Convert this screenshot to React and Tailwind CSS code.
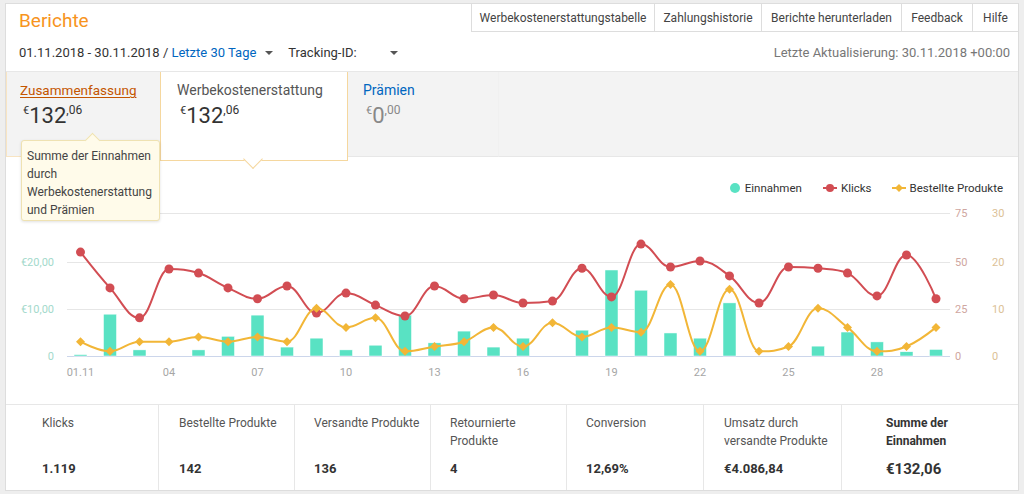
import React from "react";

const bars = [0.3, 8.9, 1.3, 0, 1.3, 4.2, 8.7, 1.9, 3.8, 1.3, 2.3, 8.7, 2.8, 5.3, 1.9, 3.8, 0, 5.5, 18.3, 14, 4.9, 3.8, 11.3, 0, 0, 2.1, 5.1, 3, 0.9, 1.4];
const klicks = [54.5, 35.7, 20, 45.6, 43.5, 35.7, 30, 36.7, 22.5, 33, 26.7, 21, 36.7, 30, 32, 27.8, 28.8, 46, 31, 58.7, 46.7, 49.8, 42, 27.8, 46.7, 46, 43.5, 31.5, 53, 30];
const bestellt = [3, 1, 3, 3, 4, 3, 4, 3, 10, 6, 8, 1, 2, 3, 6, 2, 7, 4, 6, 5, 15, 1, 14, 1, 2, 10, 6, 1, 2, 6];

const xAt = (i) => 80.5 + i * 29.5;
const BASE = 356;

// highcharts-like spline
const spline = (pts) => {
  const sm = 1.5;
  const den = 2.5;
  const rc = [];
  let d = `M${pts[0][0]},${pts[0][1]}`;
  pts.forEach((p, i) => {
    const last = pts[i - 1];
    const next = pts[i + 1];
    let lcx = p[0], lcy = p[1];
    if (last && next) {
      lcx = (sm * p[0] + last[0]) / den;
      lcy = (sm * p[1] + last[1]) / den;
      const rcx = (sm * p[0] + next[0]) / den;
      let rcy = (sm * p[1] + next[1]) / den;
      const corr = ((rcy - lcy) * (rcx - p[0])) / (rcx - lcx) + p[1] - rcy;
      lcy += corr;
      rcy += corr;
      if (lcy > last[1] && lcy > p[1]) {
        lcy = Math.max(last[1], p[1]);
        rcy = 2 * p[1] - lcy;
      } else if (lcy < last[1] && lcy < p[1]) {
        lcy = Math.min(last[1], p[1]);
        rcy = 2 * p[1] - lcy;
      }
      if (rcy > next[1] && rcy > p[1]) {
        rcy = Math.max(next[1], p[1]);
        lcy = 2 * p[1] - rcy;
      } else if (rcy < next[1] && rcy < p[1]) {
        rcy = Math.min(next[1], p[1]);
        lcy = 2 * p[1] - rcy;
      }
      rc[i] = [rcx, rcy];
    }
    if (last) {
      const r = rc[i - 1] || last;
      d += ` C${r[0]},${r[1]} ${lcx},${lcy} ${p[0]},${p[1]}`;
    }
  });
  return d;
};

const Chart = () => {
  const kPts = klicks.map((v, i) => [xAt(i), BASE - (v * 143) / 75]);
  const bPts = bestellt.map((v, i) => [xAt(i), BASE - (v * 143) / 30]);
  const xLabels = ["01.11", "04", "07", "10", "13", "16", "19", "22", "25", "28"];

  return (
    <svg width="1012" height="209" className="block">
      <g transform="translate(-6,-195)">
        {/* grid */}
        {[213, 262, 309].map((y) => (
          <line key={y} x1="67" x2="950" y1={y + 0.5} y2={y + 0.5} stroke="#e6e6e6" />
        ))}
        <line x1="67" x2="950" y1="356.5" y2="356.5" stroke="#ccd6eb" />

        {/* left axis */}
        <g fill="#a3d9cb" fontSize="11" textAnchor="end">
          <text x="54" y="266">€20,00</text>
          <text x="54" y="313">€10,00</text>
          <text x="54" y="360">0</text>
        </g>
        {/* right axes */}
        <g fill="#cfa6a0" fontSize="11">
          <text x="955" y="217">75</text>
          <text x="955" y="266">50</text>
          <text x="955" y="313">25</text>
          <text x="955" y="360">0</text>
        </g>
        <g fill="#dcc196" fontSize="11">
          <text x="992" y="217">30</text>
          <text x="992" y="266">20</text>
          <text x="992" y="313">10</text>
          <text x="992" y="360">0</text>
        </g>

        {/* x labels */}
        <g fill="#a6a6a6" fontSize="11" textAnchor="middle">
          {xLabels.map((l, k) => (
            <text key={l} x={xAt(k * 3)} y="376">
              {l}
            </text>
          ))}
        </g>

        {/* bars */}
        {bars.map((v, i) =>
          v > 0 ? (
            <rect
              key={i}
              x={xAt(i) - 6.5}
              y={BASE - v * 4.7}
              width="13"
              height={v * 4.7}
              fill="#59e2c3"
              stroke="#ffffff"
              strokeWidth="0.5"
            />
          ) : null
        )}

        {/* klicks */}
        <path d={spline(kPts)} fill="none" stroke="#d24d53" strokeWidth="2" />
        {kPts.map((p, i) => (
          <circle key={i} cx={p[0]} cy={p[1]} r="4.5" fill="#d24d53" />
        ))}

        {/* bestellte produkte */}
        <path d={spline(bPts)} fill="none" stroke="#f2b637" strokeWidth="2" />
        {bPts.map((p, i) => (
          <path
            key={i}
            d={`M${p[0]},${p[1] - 4.5} L${p[0] + 4.5},${p[1]} L${p[0]},${p[1] + 4.5} L${p[0] - 4.5},${p[1]} Z`}
            fill="#f2b637"
          />
        ))}
      </g>
    </svg>
  );
};

const Caret = () => (
  <span className="inline-block w-0 h-0 border-x-[4px] border-x-transparent border-t-[4px] border-t-[#555555] align-middle" />
);

const Price = ({ whole, cents, muted }) => (
  <div className={`flex items-start ml-[3px] mt-[3px] ${muted ? "text-[#888888]" : "text-[#333333]"}`}>
    <span className="text-[11px] leading-[14px] mt-[1px]">€</span>
    <span className="text-[22px] leading-[26px]">{whole}</span>
    <span className="text-[12px] leading-[14px]">,{cents}</span>
  </div>
);

const stats = [
  { label: ["Klicks"], value: "1.119", w: "w-[153px]", pl: "pl-[36px]" },
  { label: ["Bestellte Produkte"], value: "142", w: "w-[136px]", pl: "pl-[20px]" },
  { label: ["Versandte Produkte"], value: "136", w: "w-[136px]", pl: "pl-[19px]" },
  { label: ["Retournierte", "Produkte"], value: "4", w: "w-[136px]", pl: "pl-[19px]" },
  { label: ["Conversion"], value: "12,69%", w: "w-[137px]", pl: "pl-[19px]" },
  { label: ["Umsatz durch", "versandte Produkte"], value: "€4.086,84", w: "w-[138px]", pl: "pl-[20px]" },
];

export default function App() {
  return (
    <div className="min-h-screen bg-[#eeeeee] pt-[3px] px-[5px] font-['Roboto',sans-serif] text-[#333333]">
      <div className="bg-white border border-[#dddddd]">
        {/* header row */}
        <div className="flex justify-between items-start h-[33px]">
          <h1 className="pl-[13px] pt-[5px] text-[19px] leading-[24px] text-[#f7941d]">Berichte</h1>
          <div className="flex text-[12px] text-[#444444]">
            {[
              ["Werbekostenerstattungstabelle", "w-[183px]"],
              ["Zahlungshistorie", "w-[107px]"],
              ["Berichte herunterladen", "w-[140px]"],
              ["Feedback", "w-[71px]"],
              ["Hilfe", "w-[46px]"],
            ].map(([t, w]) => (
              <div
                key={t}
                className={`${w} h-[28px] flex items-center justify-center border-l border-b border-[#dddddd]`}
              >
                {t}
              </div>
            ))}
          </div>
        </div>

        {/* filter row */}
        <div className="flex items-center justify-between h-[34px] pb-[3px] pl-[13px] pr-[8px] text-[13px]">
          <div className="flex items-center">
            <span>01.11.2018 - 30.11.2018 /&nbsp;</span>
            <span className="text-[#0066c0]">Letzte 30 Tage</span>
            <span className="ml-[9px]">
              <Caret />
            </span>
            <span className="ml-[15px]">Tracking-ID:</span>
            <span className="ml-[33px]">
              <Caret />
            </span>
          </div>
          <div className="text-[#777777]">Letzte Aktualisierung: 30.11.2018 +00:00</div>
        </div>

        {/* tabs */}
        <div className="flex items-start h-[86px] bg-[#f3f3f3] border-t border-[#e7e7e7]">
          <div className="relative w-[154px] h-[85px] pl-[13px] pt-[8px] border-l border-b border-[#f8e4c2]">
            <div className="text-[13.5px] leading-[20px] text-[#c45500] underline underline-offset-2">Zusammenfassung</div>
            <Price whole="132" cents="06" />
            {/* tooltip */}
            <div className="absolute left-[14px] top-[68px] z-20 w-[139px] h-[81px] bg-[#fffbea] border border-[#efe2b2] rounded-[3px] shadow-[0_1px_3px_rgba(0,0,0,0.12)] pl-[5px] pt-[6px] text-[12px] leading-[18px] text-[#444444]">
              <span className="absolute left-[65px] -top-[6px] w-[11px] h-[11px] rotate-45 bg-[#fffbea] border-l border-t border-[#efe2b2]" />
              <span className="relative block">Summe der Einnahmen</span>
              <span className="relative block">durch</span>
              <span className="relative block">Werbekostenerstattung</span>
              <span className="relative block">und Prämien</span>
            </div>
          </div>
          <div className="relative z-10 w-[188px] h-[89px] bg-white border-x border-b border-[#f5d79e] pl-[16px] pt-[8px]">
            <div className="text-[14px] leading-[20px] text-[#555555]">Werbekostenerstattung</div>
            <Price whole="132" cents="06" />
            <span className="absolute left-[85px] top-[80px] w-[14px] h-[14px] rotate-45 bg-white border-r border-b border-[#f5d79e]" />
          </div>
          <div className="w-[151px] h-[85px] pl-[15px] pt-[8px] border-r border-[#f0f0f0] border-b border-b-[#e7e7e7]">
            <div className="text-[14px] leading-[20px] text-[#0066c0]">Prämien</div>
            <Price whole="0" cents="00" muted />
          </div>
          <div className="flex-1 h-[85px] border-b border-[#e7e7e7]" />
        </div>

        {/* chart */}
        <div className="pt-[24px]">
          <div className="flex justify-end items-center h-[14px] pr-[15px] text-[11.5px] leading-[14px] text-[#333333]">
            <span className="w-[10px] h-[10px] rounded-full bg-[#59e2c3]" />
            <span className="ml-[5px]">Einnahmen</span>
            <svg width="14" height="10" className="ml-[21px]">
              <line x1="0" x2="14" y1="5" y2="5" stroke="#d24d53" strokeWidth="2" />
              <circle cx="7" cy="5" r="4" fill="#d24d53" />
            </svg>
            <span className="ml-[4px]">Klicks</span>
            <svg width="14" height="10" className="ml-[20px]">
              <line x1="0" x2="14" y1="5" y2="5" stroke="#f2b637" strokeWidth="2" />
              <path d="M7,1 L11,5 L7,9 L3,5 Z" fill="#f2b637" />
            </svg>
            <span className="ml-[4px]">Bestellte Produkte</span>
          </div>
          <Chart />
        </div>

        {/* stats */}
        <div className="flex h-[86px] border-t border-[#e7e7e7] text-[12px]">
          {stats.map((s) => (
            <div key={s.value} className={`${s.w} ${s.pl} pt-[9px] border-r border-[#e7e7e7] flex flex-col`}>
              <div className="h-[36px] leading-[18px] text-[#555555]">
                {s.label.map((l) => (
                  <div key={l}>{l}</div>
                ))}
              </div>
              <div className="mt-[10px] leading-[18px] text-[13px] font-bold text-[#333333]">{s.value}</div>
            </div>
          ))}
          <div className="flex-1 pl-[44px] pt-[9px] flex flex-col">
            <div className="h-[36px] leading-[18px] font-bold text-[#333333]">
              <div>Summe der</div>
              <div>Einnahmen</div>
            </div>
            <div className="mt-[10px] leading-[18px] text-[15px] font-bold text-[#333333]">€132,06</div>
          </div>
        </div>
      </div>
    </div>
  );
}
